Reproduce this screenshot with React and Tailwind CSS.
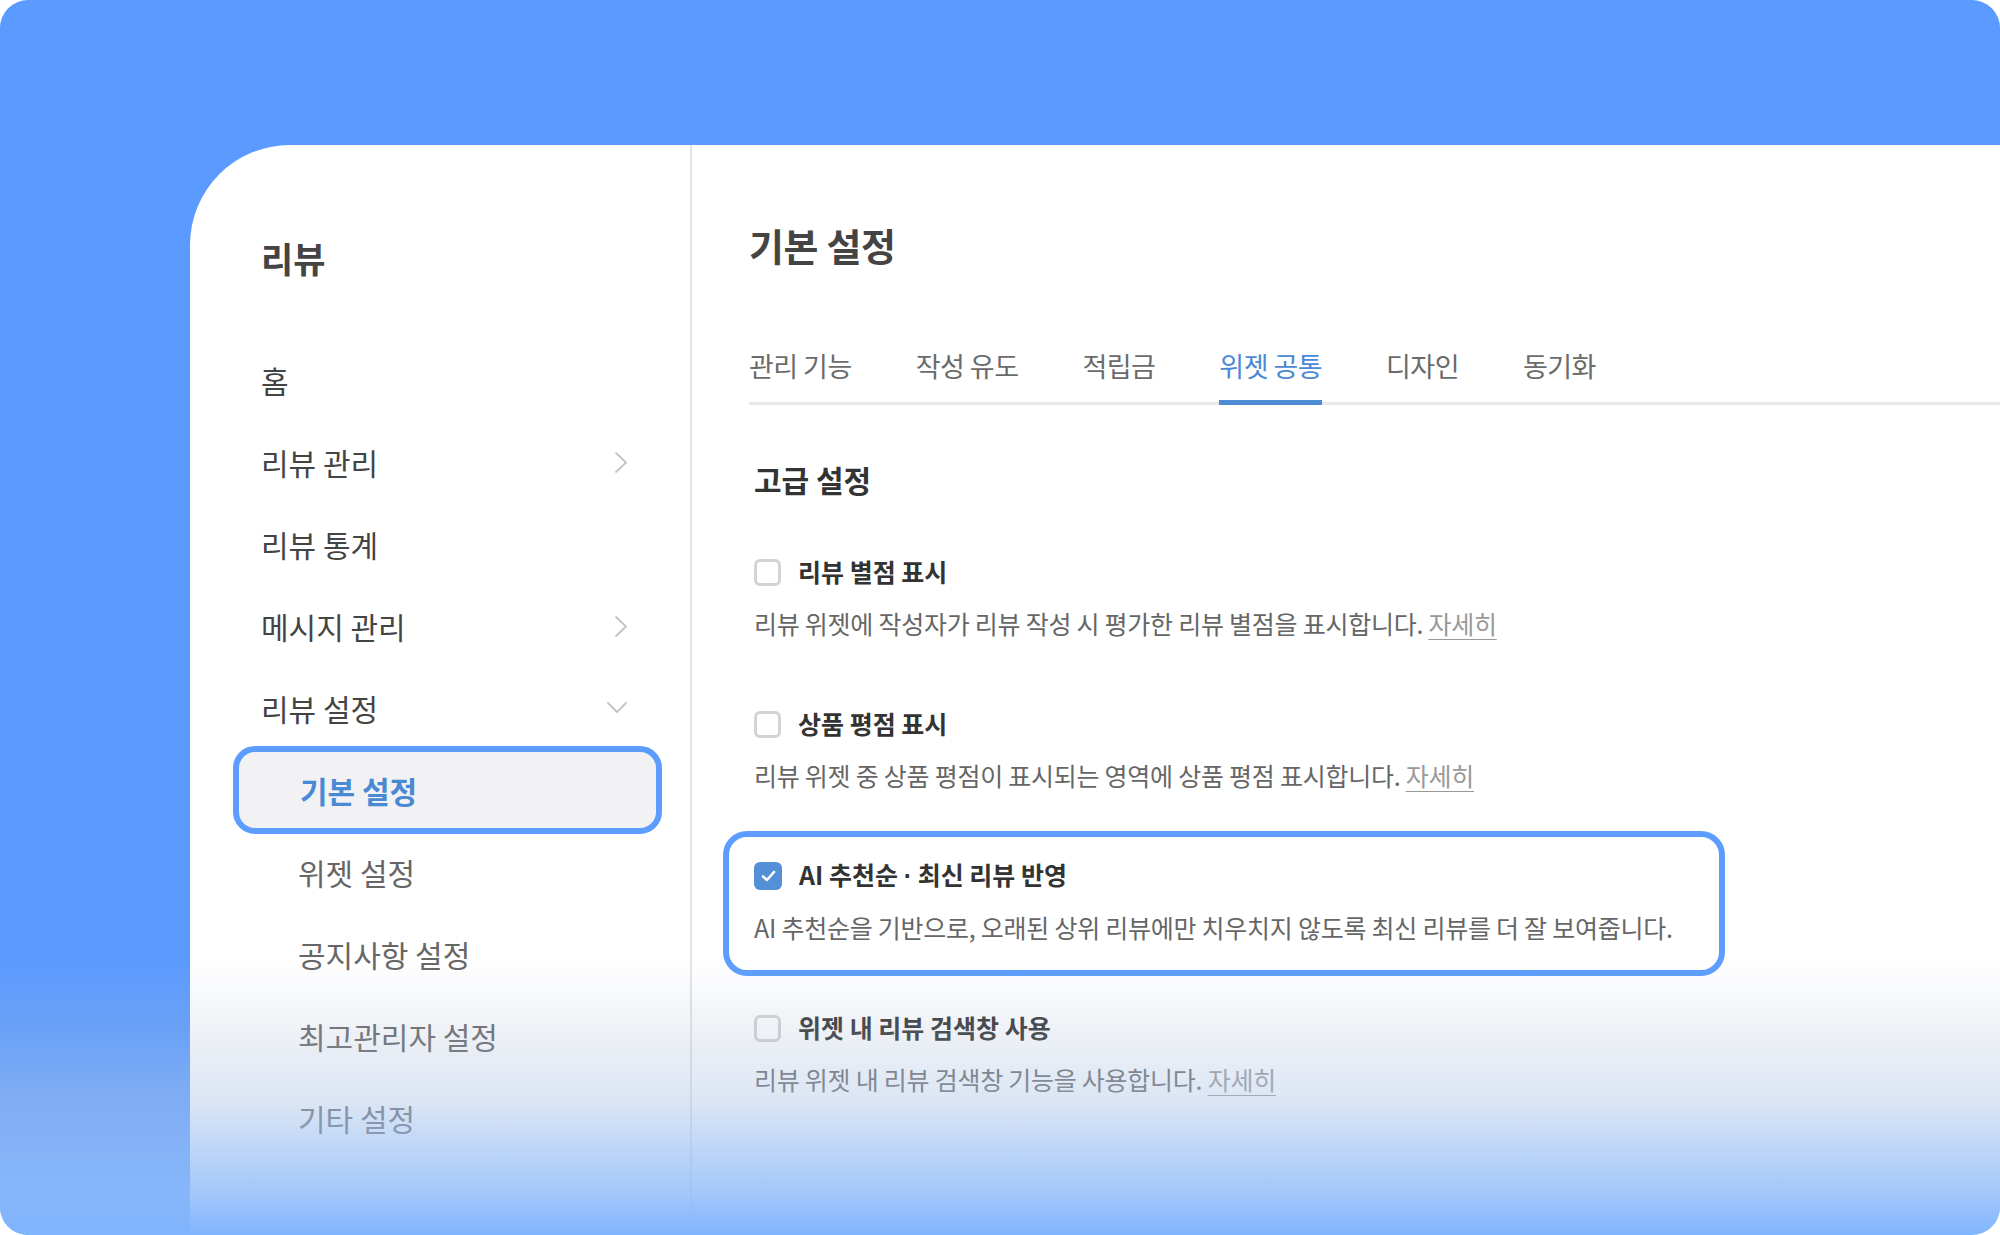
import React from "react";

const menu = [
  { label: "홈" },
  { label: "리뷰 관리", icon: "right" },
  { label: "리뷰 통계" },
  { label: "메시지 관리", icon: "right" },
  { label: "리뷰 설정", icon: "down" },
  { label: "기본 설정", sub: true, active: true },
  { label: "위젯 설정", sub: true },
  { label: "공지사항 설정", sub: true },
  { label: "최고관리자 설정", sub: true },
  { label: "기타 설정", sub: true },
];

const tabs = ["관리 기능", "작성 유도", "적립금", "위젯 공통", "디자인", "동기화"];

const options = [
  {
    title: "리뷰 별점 표시",
    desc: "리뷰 위젯에 작성자가 리뷰 작성 시 평가한 리뷰 별점을 표시합니다.",
    more: true,
  },
  {
    title: "상품 평점 표시",
    desc: "리뷰 위젯 중 상품 평점이 표시되는 영역에 상품 평점 표시합니다.",
    more: true,
  },
  {
    title: (
      <>
        AI 추천순 <span className="font-['Liberation_Sans',sans-serif]">·</span> 최신 리뷰 반영
      </>
    ),
    key: "ai",
    desc: "AI 추천순을 기반으로, 오래된 상위 리뷰에만 치우치지 않도록 최신 리뷰를 더 잘 보여줍니다.",
    checked: true,
    focus: true,
  },
  {
    title: "위젯 내 리뷰 검색창 사용",
    desc: "리뷰 위젯 내 리뷰 검색창 기능을 사용합니다.",
    more: true,
  },
];

function Chevron({ dir }) {
  if (dir === "down") {
    return (
      <svg width="20" height="12" viewBox="0 0 20 12" fill="none">
        <polyline points="1,1 10,10 19,1" stroke="#c4c4c4" strokeWidth="1.8" strokeLinecap="round" strokeLinejoin="round" />
      </svg>
    );
  }
  return (
    <svg width="12" height="21" viewBox="0 0 12 21" fill="none">
      <polyline points="1,1 11,10.5 1,20" stroke="#c4c4c4" strokeWidth="1.8" strokeLinecap="round" strokeLinejoin="round" />
    </svg>
  );
}

function Checkbox({ checked }) {
  if (checked) {
    return (
      <span className="flex h-[28px] w-[28px] shrink-0 items-center justify-center rounded-[6px] bg-[#5390d8]">
        <svg width="15" height="12" viewBox="0 0 15 12" fill="none">
          <polyline points="2,6.5 6,10 13,2" stroke="#fff" strokeWidth="2.6" strokeLinecap="round" strokeLinejoin="round" />
        </svg>
      </span>
    );
  }
  return <span className="h-[27px] w-[27px] shrink-0 rounded-[6px] border-[3px] border-[#d3d3d3] bg-white" />;
}

function Sidebar() {
  return (
    <aside className="w-[502px] shrink-0 border-r-2 border-[#e4e4e4] pt-[91px]">
      <h1 className="pl-[71px] text-[35px] leading-[44px] font-bold text-[#444]">리뷰</h1>
      <nav className="mt-[59px] flex flex-col">
        {menu.map((item) =>
          item.active ? (
            <div
              key={item.label}
              className="-my-[3px] ml-[43px] mr-[28px] flex h-[88px] items-center rounded-[22px] border-[6px] border-[#5c9dff] bg-[#f2f2f5] pl-[61px] text-[30px] font-bold text-[#4a89d4]"
            >
              {item.label}
            </div>
          ) : (
            <div
              key={item.label}
              className={
                item.sub
                  ? "flex h-[82px] items-center pl-[108px] text-[30px] text-[#666]"
                  : "flex h-[82px] items-center justify-between pl-[71px] pr-[63px] text-[30px] text-[#444]"
              }
            >
              <span>{item.label}</span>
              {item.icon && <Chevron dir={item.icon} />}
            </div>
          )
        )}
      </nav>
    </aside>
  );
}

function Option({ opt }) {
  const body = (
    <>
      <div className="flex h-[30px] items-center gap-[17px]">
        <Checkbox checked={opt.checked} />
        <span className="text-[25px] font-bold text-[#333]">{opt.title}</span>
      </div>
      <p className="mt-[21px] text-[25px] leading-[30px] tracking-[-0.01em] text-[#666]">
        {opt.desc}
        {opt.more && (
          <>
            {" "}
            <span className="text-[#999] underline decoration-1 underline-offset-[5px]">자세히</span>
          </>
        )}
      </p>
    </>
  );
  if (opt.focus) {
    return (
      <div className="-mx-[31px] -mt-[30px] -mb-[34px] w-[1002px] rounded-[24px] border-[6px] border-[#5c9dff] bg-white px-[25px] pt-[24px] pb-[28px]">
        {body}
      </div>
    );
  }
  return <div>{body}</div>;
}

function Content() {
  return (
    <main className="flex-1 pl-[57px] pt-[75px]">
      <h2 className="text-[38px] leading-[50px] font-bold tracking-[-0.01em] text-[#444]">기본 설정</h2>
      <div className="mt-[78px] flex gap-[64px] border-b-[3px] border-[#e8e8e8]">
        {tabs.map((t) => (
          <div
            key={t}
            className={
              t === "위젯 공통"
                ? "-mb-[3px] border-b-[5px] border-[#4f8bd2] pb-[16px] text-[27px] leading-[36px] tracking-[-0.02em] text-[#4a89d4]"
                : "-mb-[3px] border-b-[5px] border-transparent pb-[16px] text-[27px] leading-[36px] tracking-[-0.02em] text-[#6b6b6b]"
            }
          >
            {t}
          </div>
        ))}
      </div>
      <h3 className="mt-[54px] pl-[5px] text-[30px] leading-[40px] font-bold text-[#333]">고급 설정</h3>
      <div className="mt-[58px] flex flex-col gap-[71px] pl-[5px]">
        {options.map((o) => (
          <Option key={o.key || o.title} opt={o} />
        ))}
      </div>
    </main>
  );
}

export default function App() {
  return (
    <div className="relative flex h-[1235px] w-[2000px] flex-col overflow-hidden rounded-[28px] bg-[#5b9bff] font-['Noto_Sans_CJK_KR','Noto_Sans',sans-serif]">
      <div className="mt-[145px] ml-[190px] flex flex-1 rounded-tl-[100px] bg-white">
        <Sidebar />
        <Content />
      </div>
      {/* soft fade into the brand blue at the bottom edge */}
      <div className="pointer-events-none absolute inset-x-0 bottom-0 h-[275px] bg-[linear-gradient(to_bottom,rgba(170,185,210,0)_0%,rgba(170,185,210,0.2)_26%,rgba(175,198,229,0.44)_51%,rgba(142,187,250,0.85)_87%,rgba(128,180,255,1)_100%)]" />
    </div>
  );
}
